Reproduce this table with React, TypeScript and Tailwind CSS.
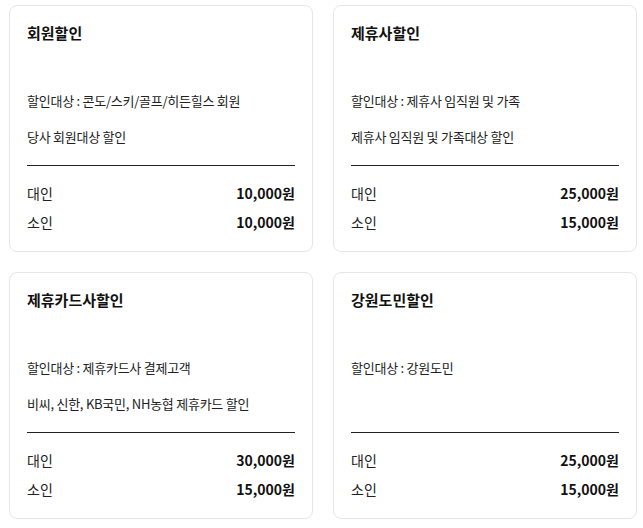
const cards = [
  {
    title: '회원할인',
    lines: ['할인대상 : 콘도/스키/골프/히든힐스 회원', '당사 회원대상 할인'],
    adult: '10,000원',
    child: '10,000원',
  },
  {
    title: '제휴사할인',
    lines: ['할인대상 : 제휴사 임직원 및 가족', '제휴사 임직원 및 가족대상 할인'],
    adult: '25,000원',
    child: '15,000원',
  },
  {
    title: '제휴카드사할인',
    lines: ['할인대상 : 제휴카드사 결제고객', '비씨, 신한, KB국민, NH농협 제휴카드 할인'],
    adult: '30,000원',
    child: '15,000원',
  },
  {
    title: '강원도민할인',
    lines: ['할인대상 : 강원도민'],
    adult: '25,000원',
    child: '15,000원',
  },
]

function DiscountCard({ title, lines, adult, child }: (typeof cards)[number]) {
  return (
    <div className="rounded-lg border border-[#e6e6e6] bg-white px-[17px] pt-[16px] pb-[19px]">
      <h3 className="text-[15px] leading-[22px] font-bold text-[#111]">{title}</h3>

      <div className="mt-[47px] h-[74px] space-y-4 text-[13px] leading-[20px] tracking-[-0.25px] text-[#222]">
        {lines.map((line) => (
          <p key={line}>{line}</p>
        ))}
      </div>

      <div className="border-t border-[#222] pt-[17px] space-y-[9px] text-[14px] leading-[20px] text-[#222]">
        <div className="flex items-center justify-between">
          <span>대인</span>
          <span className="font-bold text-[#111]">{adult}</span>
        </div>
        <div className="flex items-center justify-between">
          <span>소인</span>
          <span className="font-bold text-[#111]">{child}</span>
        </div>
      </div>
    </div>
  )
}

export default function App() {
  return (
    <div
      className="min-h-screen bg-white pt-[5px] pl-[9px] pr-[6px]"
      style={{ fontFamily: '"Noto Sans CJK KR", "Noto Sans", sans-serif' }}
    >
      <div className="grid w-[628px] grid-cols-2 gap-5">
        {cards.map((card) => (
          <DiscountCard key={card.title} {...card} />
        ))}
      </div>
    </div>
  )
}
